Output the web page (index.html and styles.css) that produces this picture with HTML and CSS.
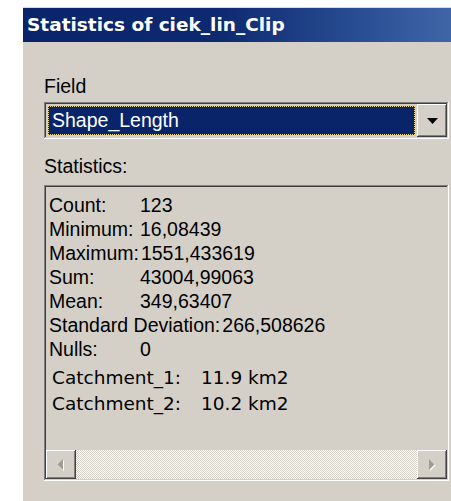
FILE: index.html
```html
<!DOCTYPE html>
<html>
<head>
<meta charset="utf-8">
<title>Statistics of ciek_lin_Clip</title>
<link rel="stylesheet" href="styles.css">
</head>
<body>
<div class="dialog">
  <div class="titlebar">Statistics of ciek_lin_Clip</div>
  <div class="content">
    <div class="label field-label">Field</div>
    <div class="combo">
      <div class="combo-value"><span class="combo-focus">Shape_Length</span></div>
      <div class="combo-button">
        <svg width="11" height="6" viewBox="0 0 11 6"><polygon points="0,0 11,0 5.5,6" fill="#000"/></svg>
      </div>
    </div>
    <div class="label stats-label">Statistics:</div>
    <div class="stats-box">
      <div class="stats-text">
        <div class="row"><span class="key">Count:</span><span>123</span></div>
        <div class="row"><span class="key">Minimum:</span><span>16,08439</span></div>
        <div class="row"><span class="key">Maximum:</span><span>1551,433619</span></div>
        <div class="row"><span class="key">Sum:</span><span>43004,99063</span></div>
        <div class="row"><span class="key">Mean:</span><span>349,63407</span></div>
        <div class="row"><span class="key">Standard Deviation:</span><span>266,508626</span></div>
        <div class="row"><span class="key">Nulls:</span><span>0</span></div>
        <div class="catchments">
          <div class="catch"><span>Catchment_1:</span><span class="catch-val">11.9 km2</span></div>
          <div class="catch"><span>Catchment_2:</span><span class="catch-val">10.2 km2</span></div>
        </div>
      </div>
      <div class="hscroll">
        <div class="sb-btn">
          <svg width="8" height="12" viewBox="0 0 8 12"><polygon points="7,1 7,12 1.5,6.5" fill="#fff"/><polygon points="6,0 6,11 0.5,5.5" fill="#a09c94"/></svg>
        </div>
        <div class="sb-track"></div>
        <div class="sb-btn">
          <svg width="8" height="12" viewBox="0 0 8 12"><polygon points="2,1 2,12 7.5,6.5" fill="#fff"/><polygon points="1,0 1,11 6.5,5.5" fill="#a09c94"/></svg>
        </div>
      </div>
    </div>
  </div>
</div>
</body>
</html>
```
FILE: styles.css
```css
html, body {
  margin: 0;
  padding: 0;
  background: #ffffff;
  overflow: hidden;
}

.dialog {
  margin: 7px 0 0 23px;
  width: 428px;
  height: 494px;
  border-top: 1px solid #dcd9d2;
  background: #d4d0c8;
  font-family: "Liberation Sans", Arial, sans-serif;
  color: #000;
}

.titlebar {
  height: 34px;
  line-height: 34px;
  padding-left: 4px;
  background: linear-gradient(to right, #0a246a 0%, #0d2970 45%, #2a4f94 80%, #4065a7 100%);
  color: #fff;
  font-family: "DejaVu Sans", Verdana, sans-serif;
  font-weight: bold;
  font-size: 18.5px;
  white-space: nowrap;
}

.content {
  padding: 0 2px 0 21px;
}

.label {
  font-size: 19.5px;
  line-height: 22px;
}

.field-label {
  margin-top: 33px;
}

/* sunken combo box */
.combo {
  margin-top: 5px;
  height: 37px;
  box-sizing: border-box;
  padding: 2px;
  display: flex;
  box-shadow: inset -1px -1px #ffffff, inset 1px 1px #808080, inset -2px -2px #d4d0c8, inset 2px 2px #404040;
  background: #d4d0c8;
}

.combo-value {
  flex: 1;
  padding: 2px;
  display: flex;
}

.combo-focus {
  flex: 1;
  background: #0a246a;
  color: #fff;
  font-size: 19.5px;
  line-height: 27px;
  padding: 1px 0 0 4px;
  outline: 1px dotted #e8d890;
  outline-offset: -1px;
}

.combo-button {
  width: 30px;
  display: flex;
  align-items: center;
  justify-content: center;
  background: #d4d0c8;
  box-shadow: inset -1px -1px #404040, inset 1px 1px #ffffff, inset -2px -2px #808080, inset 2px 2px #d4d0c8;
}

.stats-label {
  margin-top: 16px;
}

/* read-only statistics pane */
.stats-box {
  margin-top: 8px;
  height: 296px;
  box-sizing: border-box;
  padding: 2px;
  display: flex;
  flex-direction: column;
  box-shadow: inset -1px -1px #ffffff, inset 1px 1px #808080, inset -2px -2px #d4d0c8, inset 2px 2px #404040;
}

.stats-text {
  flex: 1;
  padding: 6px 0 0 3px;
  font-size: 19.5px;
  line-height: 24px;
  white-space: nowrap;
  overflow: hidden;
}

.row {
  display: flex;
}

.key {
  min-width: 89px;
  padding-right: 2px;
}

.catchments {
  margin-top: 4px;
  padding-left: 3px;
  font-family: "DejaVu Sans", Verdana, sans-serif;
  font-size: 18.5px;
  line-height: 26px;
}

.catch-val {
  margin-left: 20px;
}

.hscroll {
  height: 29px;
  display: flex;
}

.sb-btn {
  width: 30px;
  display: flex;
  align-items: center;
  justify-content: center;
  background: #d4d0c8;
  box-shadow: inset -1px -1px #404040, inset 1px 1px #ffffff, inset -2px -2px #808080, inset 2px 2px #d4d0c8;
}

.sb-track {
  flex: 1;
  background: repeating-conic-gradient(#ffffff 0 25%, #d4d0c8 0 50%) 0 0 / 2px 2px;
}
```
